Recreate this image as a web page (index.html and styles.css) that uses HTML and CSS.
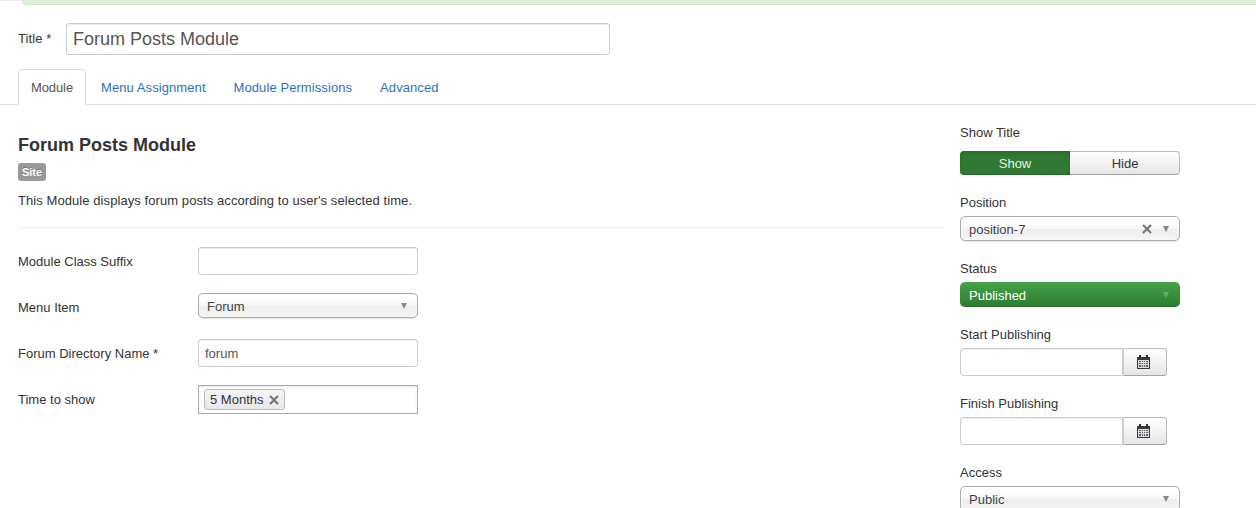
FILE: index.html
```html
<!DOCTYPE html>
<html lang="en">
<head>
<meta charset="utf-8">
<title>Forum Posts Module</title>
<link rel="stylesheet" href="styles.css">
</head>
<body>
<div class="page">
  <div class="top-strip"><div class="top-left"></div><div class="alert"></div></div>
  <div class="title-row">
    <label class="title-label">Title *</label>
    <input class="title-input" type="text" value="Forum Posts Module">
  </div>
  <ul class="tabs">
    <li class="tab active">Module</li>
    <li class="tab">Menu Assignment</li>
    <li class="tab">Module Permissions</li>
    <li class="tab">Advanced</li>
  </ul>
  <div class="columns">
    <main class="main">
      <h3 class="heading">Forum Posts Module</h3>
      <span class="badge">Site</span>
      <p class="desc">This Module displays forum posts according to user's selected time.</p>
      <hr class="rule">
      <div class="field field-first">
        <label class="field-label low-label">Module Class Suffix</label>
        <div class="input"></div>
      </div>
      <div class="field field-select">
        <label class="field-label select-label">Menu Item</label>
        <div class="chosen"><span class="chosen-text">Forum</span><span class="arrow"></span></div>
      </div>
      <div class="field field-text">
        <label class="field-label low-label">Forum Directory Name *</label>
        <div class="input">forum</div>
      </div>
      <div class="field field-multi">
        <label class="field-label">Time to show</label>
        <div class="multi"><span class="tag">5 Months <svg class="x-icon" width="10" height="10" viewBox="0 0 10 10"><path d="M1 1l8 8M9 1L1 9" stroke="#777" stroke-width="2.2" fill="none"/></svg></span></div>
      </div>
    </main>
    <aside class="side">
      <div class="group">
        <div class="side-label toggle-label">Show Title</div>
        <div class="toggle"><span class="toggle-on">Show</span><span class="toggle-off">Hide</span></div>
      </div>
      <div class="group">
        <div class="side-label">Position</div>
        <div class="chosen"><span class="chosen-text">position-7</span><svg class="x-icon clear" width="10" height="10" viewBox="0 0 10 10"><path d="M1 1l8 8M9 1L1 9" stroke="#777" stroke-width="2.2" fill="none"/></svg><span class="arrow"></span></div>
      </div>
      <div class="group">
        <div class="side-label">Status</div>
        <div class="chosen green"><span class="chosen-text">Published</span><span class="arrow"></span></div>
      </div>
      <div class="group">
        <div class="side-label">Start Publishing</div>
        <div class="date">
          <div class="date-input"></div>
          <div class="date-btn">
            <svg class="cal" width="13" height="14" viewBox="0 0 13 14"><path d="M0 2h13v12H0z" fill="#3a3a3a"/><path d="M2 0h2v3H2zM9 0h2v3H9z" fill="#2a2a2a"/><path d="M1 5h11v8H1z" fill="#dcdcdc"/><path d="M2 6h2v1H2zM5 6h1v1H5zM7 6h1v1H7zM9 6h2v1H9zM2 8h2v1H2zM5 8h1v1H5zM7 8h1v1H7zM9 8h2v1H9zM2 10h2v2H2zM5 10h1v2H5zM7 10h1v2H7zM9 10h2v2H9z" fill="#55606c"/></svg>
          </div>
        </div>
      </div>
      <div class="group">
        <div class="side-label">Finish Publishing</div>
        <div class="date">
          <div class="date-input"></div>
          <div class="date-btn">
            <svg class="cal" width="13" height="14" viewBox="0 0 13 14"><path d="M0 2h13v12H0z" fill="#3a3a3a"/><path d="M2 0h2v3H2zM9 0h2v3H9z" fill="#2a2a2a"/><path d="M1 5h11v8H1z" fill="#dcdcdc"/><path d="M2 6h2v1H2zM5 6h1v1H5zM7 6h1v1H7zM9 6h2v1H9zM2 8h2v1H2zM5 8h1v1H5zM7 8h1v1H7zM9 8h2v1H9zM2 10h2v2H2zM5 10h1v2H5zM7 10h1v2H7zM9 10h2v2H9z" fill="#55606c"/></svg>
          </div>
        </div>
      </div>
      <div class="group">
        <div class="side-label">Access</div>
        <div class="chosen"><span class="chosen-text">Public</span><span class="arrow"></span></div>
      </div>
    </aside>
  </div>
</div>
</body>
</html>
```
FILE: styles.css
```css
* { box-sizing: border-box; }
html, body { margin: 0; padding: 0; background: #fff; }
body { font-family: "Liberation Sans", Arial, sans-serif; font-size: 13px; line-height: 18px; color: #333; overflow: hidden; height: 508px; }
.page { width: 1256px; height: 508px; overflow: hidden; }
.top-strip { display: flex; height: 6px; }
.top-left { width: 22px; height: 1px; background: #e8e8e8; }
.alert { flex: 1; height: 5px; background: #dff0d8; border-bottom: 1px solid #cfe5c2; border-left: 1px solid #d6e9c6; border-bottom-left-radius: 4px; }
.title-row { display: flex; align-items: center; padding: 17px 0 0 18px; }
.title-label { width: 48px; color: #333; letter-spacing: .1px; }
.title-input { width: 544px; height: 32px; border: 1px solid #ccc; border-radius: 3px; padding: 0 6px; font-family: inherit; font-size: 18px; color: #555; box-shadow: inset 0 1px 1px rgba(0,0,0,.075); background: #fff; }
.tabs { display: flex; list-style: none; margin: 14px 0 0; padding: 0 0 0 18px; height: 36px; border-bottom: 1px solid #ddd; }
.tab { height: 36px; padding: 9px 12px; margin-right: 2px; color: #2a74b3; border: 1px solid transparent; letter-spacing: .08px; }
.tab.active { color: #555; background: #fff; border: 1px solid #ddd; border-bottom-color: #fff; border-radius: 4px 4px 0 0; letter-spacing: -.1px; }
.columns { display: flex; }
.main { width: 944px; padding: 27px 0 0 18px; flex: none; }
.heading { margin: 0; font-size: 18px; line-height: 27px; font-weight: bold; color: #333; }
.badge { display: block; width: 28px; height: 18px; margin-top: 4px; background: #999; color: #fff; font-size: 11px; line-height: 18px; font-weight: bold; text-align: center; border-radius: 3px; text-shadow: 0 -1px 0 rgba(0,0,0,.25); }
.desc { margin: 11px 0 0; line-height: 18px; letter-spacing: .075px; }
.rule { border: 0; border-top: 1px solid #eee; margin: 17px 0 0; }
.field { display: flex; align-items: center; }
.field-label { width: 180px; flex: none; }
.low-label { margin-top: 2px; }
.select-label { margin-top: 5px; }
.field-first { margin-top: 19px; }
.field-select { margin-top: 18px; }
.field-text { margin-top: 21px; }
.field-multi { margin-top: 18px; }
.input { width: 220px; height: 28px; border: 1px solid #ccc; border-radius: 3px; padding: 5px 6px 3px; color: #555; box-shadow: inset 0 1px 1px rgba(0,0,0,.075); }
.multi { width: 220px; height: 29px; border: 1px solid #aaa; padding: 3px 5px; box-shadow: inset 0 1px 3px rgba(0,0,0,.1); display: flex; }
.tag { display: flex; align-items: center; gap: 6px; height: 21px; padding: 0 5px; border: 1px solid #bbb; border-radius: 3px; background: linear-gradient(#f4f4f4, #e8e8e8); color: #333; }
.x-icon { display: block; flex: none; }
.chosen { width: 220px; height: 25px; display: flex; align-items: center; padding: 0 8px; border: 1px solid #aaa; border-radius: 5px; background: linear-gradient(#fff 20%, #f6f6f6 50%, #eee 52%, #f4f4f4 100%); box-shadow: inset 0 0 3px #fff, 0 1px 1px rgba(0,0,0,.1); color: #444; }
.chosen-text { flex: 1; margin-top: 2px; }
.arrow { width: 0; height: 0; border-left: 3.5px solid transparent; border-right: 3.5px solid transparent; border-top: 6px solid #888; margin-right: 2px; }
.clear { margin-right: 11px; }
.chosen.green { border: 0; border-bottom: 1px solid #2a6e2d; padding: 1px 9px 0; background: linear-gradient(#45a348, #2e7d32); box-shadow: none; color: #fff; }
.chosen.green .arrow { border-top-color: #6aa86c; }
.side { flex: none; padding: 19px 0 0 16px; width: 236px; }
.group { margin-bottom: 19px; }
.side-label { height: 17px; line-height: 18px; margin-bottom: 5px; }
.toggle-label { margin-bottom: 10px; }
.toggle { display: flex; width: 220px; height: 24px; }
.toggle-on { width: 110px; background: #317a33; color: #e8f0e8; text-align: center; border-radius: 4px 0 0 4px; line-height: 25px; box-shadow: inset 0 2px 4px rgba(0,0,0,.15); border-bottom: 1px solid #27662a; }
.toggle-off { width: 110px; padding-left: 1px; background: linear-gradient(#fff, #e6e6e6); border: 1px solid #bbb; border-bottom-color: #a2a2a2; border-left: 0; color: #333; text-align: center; line-height: 23px; border-radius: 0 4px 4px 0; }
.date { display: flex; width: 207px; height: 28px; }
.date-input { width: 163px; border: 1px solid #ccc; border-radius: 3px 0 0 3px; box-shadow: inset 0 1px 1px rgba(0,0,0,.075); }
.date-btn { width: 44px; border: 1px solid #bbb; border-left-color: #ccc; border-bottom-color: #a2a2a2; border-radius: 0 3px 3px 0; background: linear-gradient(#fff, #e6e6e6); display: flex; align-items: center; justify-content: center; padding-right: 4px; }
.cal { display: block; }
```
